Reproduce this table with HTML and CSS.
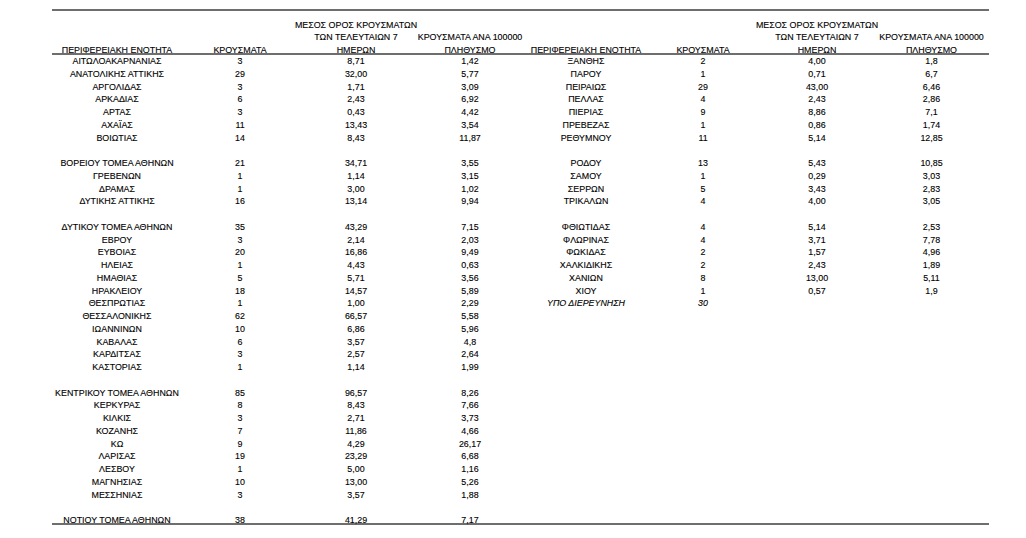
FILE: index.html
```html
<!DOCTYPE html>
<html lang="el">
<head>
<meta charset="utf-8">
<title>Κρούσματα ανά περιφερειακή ενότητα</title>
<link rel="stylesheet" href="styles.css">
</head>
<body>
<div class="sheet">
  <div class="head">
    <div class="hc">ΠΕΡΙΦΕΡΕΙΑΚΗ ΕΝΟΤΗΤΑ</div>
    <div class="hc">ΚΡΟΥΣΜΑΤΑ</div>
    <div class="hc"><span>ΜΕΣΟΣ ΟΡΟΣ ΚΡΟΥΣΜΑΤΩΝ</span><span>ΤΩΝ ΤΕΛΕΥΤΑΙΩΝ 7</span><span>ΗΜΕΡΩΝ</span></div>
    <div class="hc"><span>ΚΡΟΥΣΜΑΤΑ ΑΝΑ 100000</span><span>ΠΛΗΘΥΣΜΟ</span></div>
    <div class="hc">ΠΕΡΙΦΕΡΕΙΑΚΗ ΕΝΟΤΗΤΑ</div>
    <div class="hc">ΚΡΟΥΣΜΑΤΑ</div>
    <div class="hc"><span>ΜΕΣΟΣ ΟΡΟΣ ΚΡΟΥΣΜΑΤΩΝ</span><span>ΤΩΝ ΤΕΛΕΥΤΑΙΩΝ 7</span><span>ΗΜΕΡΩΝ</span></div>
    <div class="hc"><span>ΚΡΟΥΣΜΑΤΑ ΑΝΑ 100000</span><span>ΠΛΗΘΥΣΜΟ</span></div>
  </div>
  <div class="body">
    <div class="row"><div class="c">ΑΙΤΩΛΟΑΚΑΡΝΑΝΙΑΣ</div><div class="c">3</div><div class="c">8,71</div><div class="c">1,42</div><div class="c">ΞΑΝΘΗΣ</div><div class="c">2</div><div class="c">4,00</div><div class="c">1,8</div></div>
    <div class="row"><div class="c">ΑΝΑΤΟΛΙΚΗΣ ΑΤΤΙΚΗΣ</div><div class="c">29</div><div class="c">32,00</div><div class="c">5,77</div><div class="c">ΠΑΡΟΥ</div><div class="c">1</div><div class="c">0,71</div><div class="c">6,7</div></div>
    <div class="row"><div class="c">ΑΡΓΟΛΙΔΑΣ</div><div class="c">3</div><div class="c">1,71</div><div class="c">3,09</div><div class="c">ΠΕΙΡΑΙΩΣ</div><div class="c">29</div><div class="c">43,00</div><div class="c">6,46</div></div>
    <div class="row"><div class="c">ΑΡΚΑΔΙΑΣ</div><div class="c">6</div><div class="c">2,43</div><div class="c">6,92</div><div class="c">ΠΕΛΛΑΣ</div><div class="c">4</div><div class="c">2,43</div><div class="c">2,86</div></div>
    <div class="row"><div class="c">ΑΡΤΑΣ</div><div class="c">3</div><div class="c">0,43</div><div class="c">4,42</div><div class="c">ΠΙΕΡΙΑΣ</div><div class="c">9</div><div class="c">8,86</div><div class="c">7,1</div></div>
    <div class="row"><div class="c">ΑΧΑΪΑΣ</div><div class="c">11</div><div class="c">13,43</div><div class="c">3,54</div><div class="c">ΠΡΕΒΕΖΑΣ</div><div class="c">1</div><div class="c">0,86</div><div class="c">1,74</div></div>
    <div class="row"><div class="c">ΒΟΙΩΤΙΑΣ</div><div class="c">14</div><div class="c">8,43</div><div class="c">11,87</div><div class="c">ΡΕΘΥΜΝΟΥ</div><div class="c">11</div><div class="c">5,14</div><div class="c">12,85</div></div>
    <div class="row"></div>
    <div class="row"><div class="c">ΒΟΡΕΙΟΥ ΤΟΜΕΑ ΑΘΗΝΩΝ</div><div class="c">21</div><div class="c">34,71</div><div class="c">3,55</div><div class="c">ΡΟΔΟΥ</div><div class="c">13</div><div class="c">5,43</div><div class="c">10,85</div></div>
    <div class="row"><div class="c">ΓΡΕΒΕΝΩΝ</div><div class="c">1</div><div class="c">1,14</div><div class="c">3,15</div><div class="c">ΣΑΜΟΥ</div><div class="c">1</div><div class="c">0,29</div><div class="c">3,03</div></div>
    <div class="row"><div class="c">ΔΡΑΜΑΣ</div><div class="c">1</div><div class="c">3,00</div><div class="c">1,02</div><div class="c">ΣΕΡΡΩΝ</div><div class="c">5</div><div class="c">3,43</div><div class="c">2,83</div></div>
    <div class="row"><div class="c">ΔΥΤΙΚΗΣ ΑΤΤΙΚΗΣ</div><div class="c">16</div><div class="c">13,14</div><div class="c">9,94</div><div class="c">ΤΡΙΚΑΛΩΝ</div><div class="c">4</div><div class="c">4,00</div><div class="c">3,05</div></div>
    <div class="row"></div>
    <div class="row"><div class="c">ΔΥΤΙΚΟΥ ΤΟΜΕΑ ΑΘΗΝΩΝ</div><div class="c">35</div><div class="c">43,29</div><div class="c">7,15</div><div class="c">ΦΘΙΩΤΙΔΑΣ</div><div class="c">4</div><div class="c">5,14</div><div class="c">2,53</div></div>
    <div class="row"><div class="c">ΕΒΡΟΥ</div><div class="c">3</div><div class="c">2,14</div><div class="c">2,03</div><div class="c">ΦΛΩΡΙΝΑΣ</div><div class="c">4</div><div class="c">3,71</div><div class="c">7,78</div></div>
    <div class="row"><div class="c">ΕΥΒΟΙΑΣ</div><div class="c">20</div><div class="c">16,86</div><div class="c">9,49</div><div class="c">ΦΩΚΙΔΑΣ</div><div class="c">2</div><div class="c">1,57</div><div class="c">4,96</div></div>
    <div class="row"><div class="c">ΗΛΕΙΑΣ</div><div class="c">1</div><div class="c">4,43</div><div class="c">0,63</div><div class="c">ΧΑΛΚΙΔΙΚΗΣ</div><div class="c">2</div><div class="c">2,43</div><div class="c">1,89</div></div>
    <div class="row"><div class="c">ΗΜΑΘΙΑΣ</div><div class="c">5</div><div class="c">5,71</div><div class="c">3,56</div><div class="c">ΧΑΝΙΩΝ</div><div class="c">8</div><div class="c">13,00</div><div class="c">5,11</div></div>
    <div class="row"><div class="c">ΗΡΑΚΛΕΙΟΥ</div><div class="c">18</div><div class="c">14,57</div><div class="c">5,89</div><div class="c">ΧΙΟΥ</div><div class="c">1</div><div class="c">0,57</div><div class="c">1,9</div></div>
    <div class="row"><div class="c">ΘΕΣΠΡΩΤΙΑΣ</div><div class="c">1</div><div class="c">1,00</div><div class="c">2,29</div><div class="c it">ΥΠΟ ΔΙΕΡΕΥΝΗΣΗ</div><div class="c it">30</div></div>
    <div class="row"><div class="c">ΘΕΣΣΑΛΟΝΙΚΗΣ</div><div class="c">62</div><div class="c">66,57</div><div class="c">5,58</div></div>
    <div class="row"><div class="c">ΙΩΑΝΝΙΝΩΝ</div><div class="c">10</div><div class="c">6,86</div><div class="c">5,96</div></div>
    <div class="row"><div class="c">ΚΑΒΑΛΑΣ</div><div class="c">6</div><div class="c">3,57</div><div class="c">4,8</div></div>
    <div class="row"><div class="c">ΚΑΡΔΙΤΣΑΣ</div><div class="c">3</div><div class="c">2,57</div><div class="c">2,64</div></div>
    <div class="row"><div class="c">ΚΑΣΤΟΡΙΑΣ</div><div class="c">1</div><div class="c">1,14</div><div class="c">1,99</div></div>
    <div class="row"></div>
    <div class="row"><div class="c">ΚΕΝΤΡΙΚΟΥ ΤΟΜΕΑ ΑΘΗΝΩΝ</div><div class="c">85</div><div class="c">96,57</div><div class="c">8,26</div></div>
    <div class="row"><div class="c">ΚΕΡΚΥΡΑΣ</div><div class="c">8</div><div class="c">8,43</div><div class="c">7,66</div></div>
    <div class="row"><div class="c">ΚΙΛΚΙΣ</div><div class="c">3</div><div class="c">2,71</div><div class="c">3,73</div></div>
    <div class="row"><div class="c">ΚΟΖΑΝΗΣ</div><div class="c">7</div><div class="c">11,86</div><div class="c">4,66</div></div>
    <div class="row"><div class="c">ΚΩ</div><div class="c">9</div><div class="c">4,29</div><div class="c">26,17</div></div>
    <div class="row"><div class="c">ΛΑΡΙΣΑΣ</div><div class="c">19</div><div class="c">23,29</div><div class="c">6,68</div></div>
    <div class="row"><div class="c">ΛΕΣΒΟΥ</div><div class="c">1</div><div class="c">5,00</div><div class="c">1,16</div></div>
    <div class="row"><div class="c">ΜΑΓΝΗΣΙΑΣ</div><div class="c">10</div><div class="c">13,00</div><div class="c">5,26</div></div>
    <div class="row"><div class="c">ΜΕΣΣΗΝΙΑΣ</div><div class="c">3</div><div class="c">3,57</div><div class="c">1,88</div></div>
    <div class="row"></div>
    <div class="row last"><div class="c">ΝΟΤΙΟΥ ΤΟΜΕΑ ΑΘΗΝΩΝ</div><div class="c">38</div><div class="c">41,29</div><div class="c">7,17</div></div>
  </div>
</div>
</body>
</html>
```

FILE: styles.css
```css
html, body {
  margin: 0;
  padding: 0;
  background: #ffffff;
}

body {
  font-family: "Liberation Sans", Arial, sans-serif;
  font-size: 8.9px;
  color: #000000;
  -webkit-text-stroke: 0.12px #000000;
}

.sheet {
  width: 937px;
  margin-left: 52px;
  padding-top: 9px;
}

.head,
.row {
  display: grid;
  grid-template-columns: 130px 116px 116px 112px 120px 114px 114px 115px;
}

.head {
  height: 42px;
  border-top: 2px solid #6e6e6e;
  border-bottom: 2px solid #6e6e6e;
  line-height: 12.6px;
}

.hc {
  align-self: end;
  margin-bottom: -3.5px;
  display: flex;
  flex-direction: column;
  align-items: center;
  white-space: nowrap;
}

.body {
  border-bottom: 2px solid #6e6e6e;
}

.row {
  height: 12.75px;
  line-height: 12.75px;
}

.row.last {
  height: 9.3px;
}

.c {
  display: flex;
  justify-content: center;
  white-space: nowrap;
}

.it {
  font-style: italic;
}
```
